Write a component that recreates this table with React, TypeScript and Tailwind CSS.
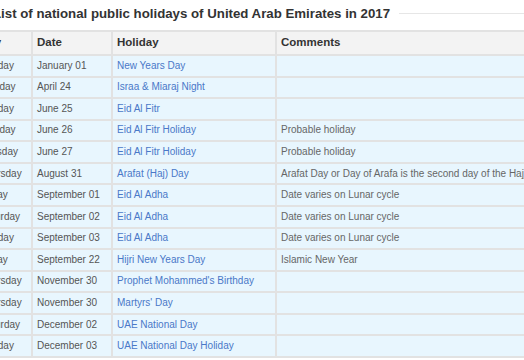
const rows: [string, string, string, string][] = [
  ["Sunday", "January 01", "New Years Day", ""],
  ["Monday", "April 24", "Israa & Miaraj Night", ""],
  ["Sunday", "June 25", "Eid Al Fitr", ""],
  ["Monday", "June 26", "Eid Al Fitr Holiday", "Probable holiday"],
  ["Tuesday", "June 27", "Eid Al Fitr Holiday", "Probable holiday"],
  [
    "Thursday",
    "August 31",
    "Arafat (Haj) Day",
    "Arafat Day or Day of Arafa is the second day of the Hajj pilgrimage",
  ],
  ["Friday", "September 01", "Eid Al Adha", "Date varies on Lunar cycle"],
  ["Saturday", "September 02", "Eid Al Adha", "Date varies on Lunar cycle"],
  ["Sunday", "September 03", "Eid Al Adha", "Date varies on Lunar cycle"],
  ["Friday", "September 22", "Hijri New Years Day", "Islamic New Year"],
  ["Thursday", "November 30", "Prophet Mohammed's Birthday", ""],
  ["Thursday", "November 30", "Martyrs' Day", ""],
  ["Saturday", "December 02", "UAE National Day", ""],
  ["Sunday", "December 03", "UAE National Day Holiday", ""],
];

export default function App() {
  return (
    <main className="h-[360px] w-[524px] overflow-hidden bg-white font-['Liberation_Sans',Arial,sans-serif]">
      <div className="-ml-[26px] w-[900px] pt-[6px]">
        <div className="flex items-center gap-[9px] pl-[19px]">
          <h1 className="text-[13.25px] font-bold leading-[15px] text-[#333]">
            List of national public holidays of United Arab Emirates in 2017
          </h1>
          <div className="h-px flex-1 bg-[#e6e6e6]" />
        </div>

        <table className="mt-[9px] table-fixed border-collapse">
          <colgroup>
            <col className="w-[57px]" />
            <col className="w-[80px]" />
            <col className="w-[164px]" />
            <col className="w-[560px]" />
          </colgroup>
          <thead>
            <tr className="h-[24px] bg-[#f3f3f3] text-left text-[11.5px] font-bold text-[#333]">
              <th className="border-2 border-[#e2e2e2] px-1 py-0">Day</th>
              <th className="border-2 border-[#e2e2e2] px-1 py-0">Date</th>
              <th className="border-2 border-[#e2e2e2] px-1 py-0">Holiday</th>
              <th className="border-2 border-[#e2e2e2] px-1 py-0">Comments</th>
            </tr>
          </thead>
          <tbody>
            {rows.map(([day, date, holiday, comment], i) => (
              <tr key={i} className="h-[21.57px] bg-[#e8f6fe] text-[10px] leading-[12px]">
                <td className="whitespace-nowrap border-2 border-[#e2e2e2] px-1 py-0 text-[#555]">{day}</td>
                <td className="whitespace-nowrap border-2 border-[#e2e2e2] px-1 py-0 text-[#555]">{date}</td>
                <td className="whitespace-nowrap border-2 border-[#e2e2e2] px-1 py-0">
                  <a href="#" className="text-[#4a78c8]">
                    {holiday}
                  </a>
                </td>
                <td className="whitespace-nowrap border-2 border-[#e2e2e2] px-1 py-0 text-[#666]">{comment}</td>
              </tr>
            ))}
          </tbody>
        </table>
      </div>
    </main>
  );
}
